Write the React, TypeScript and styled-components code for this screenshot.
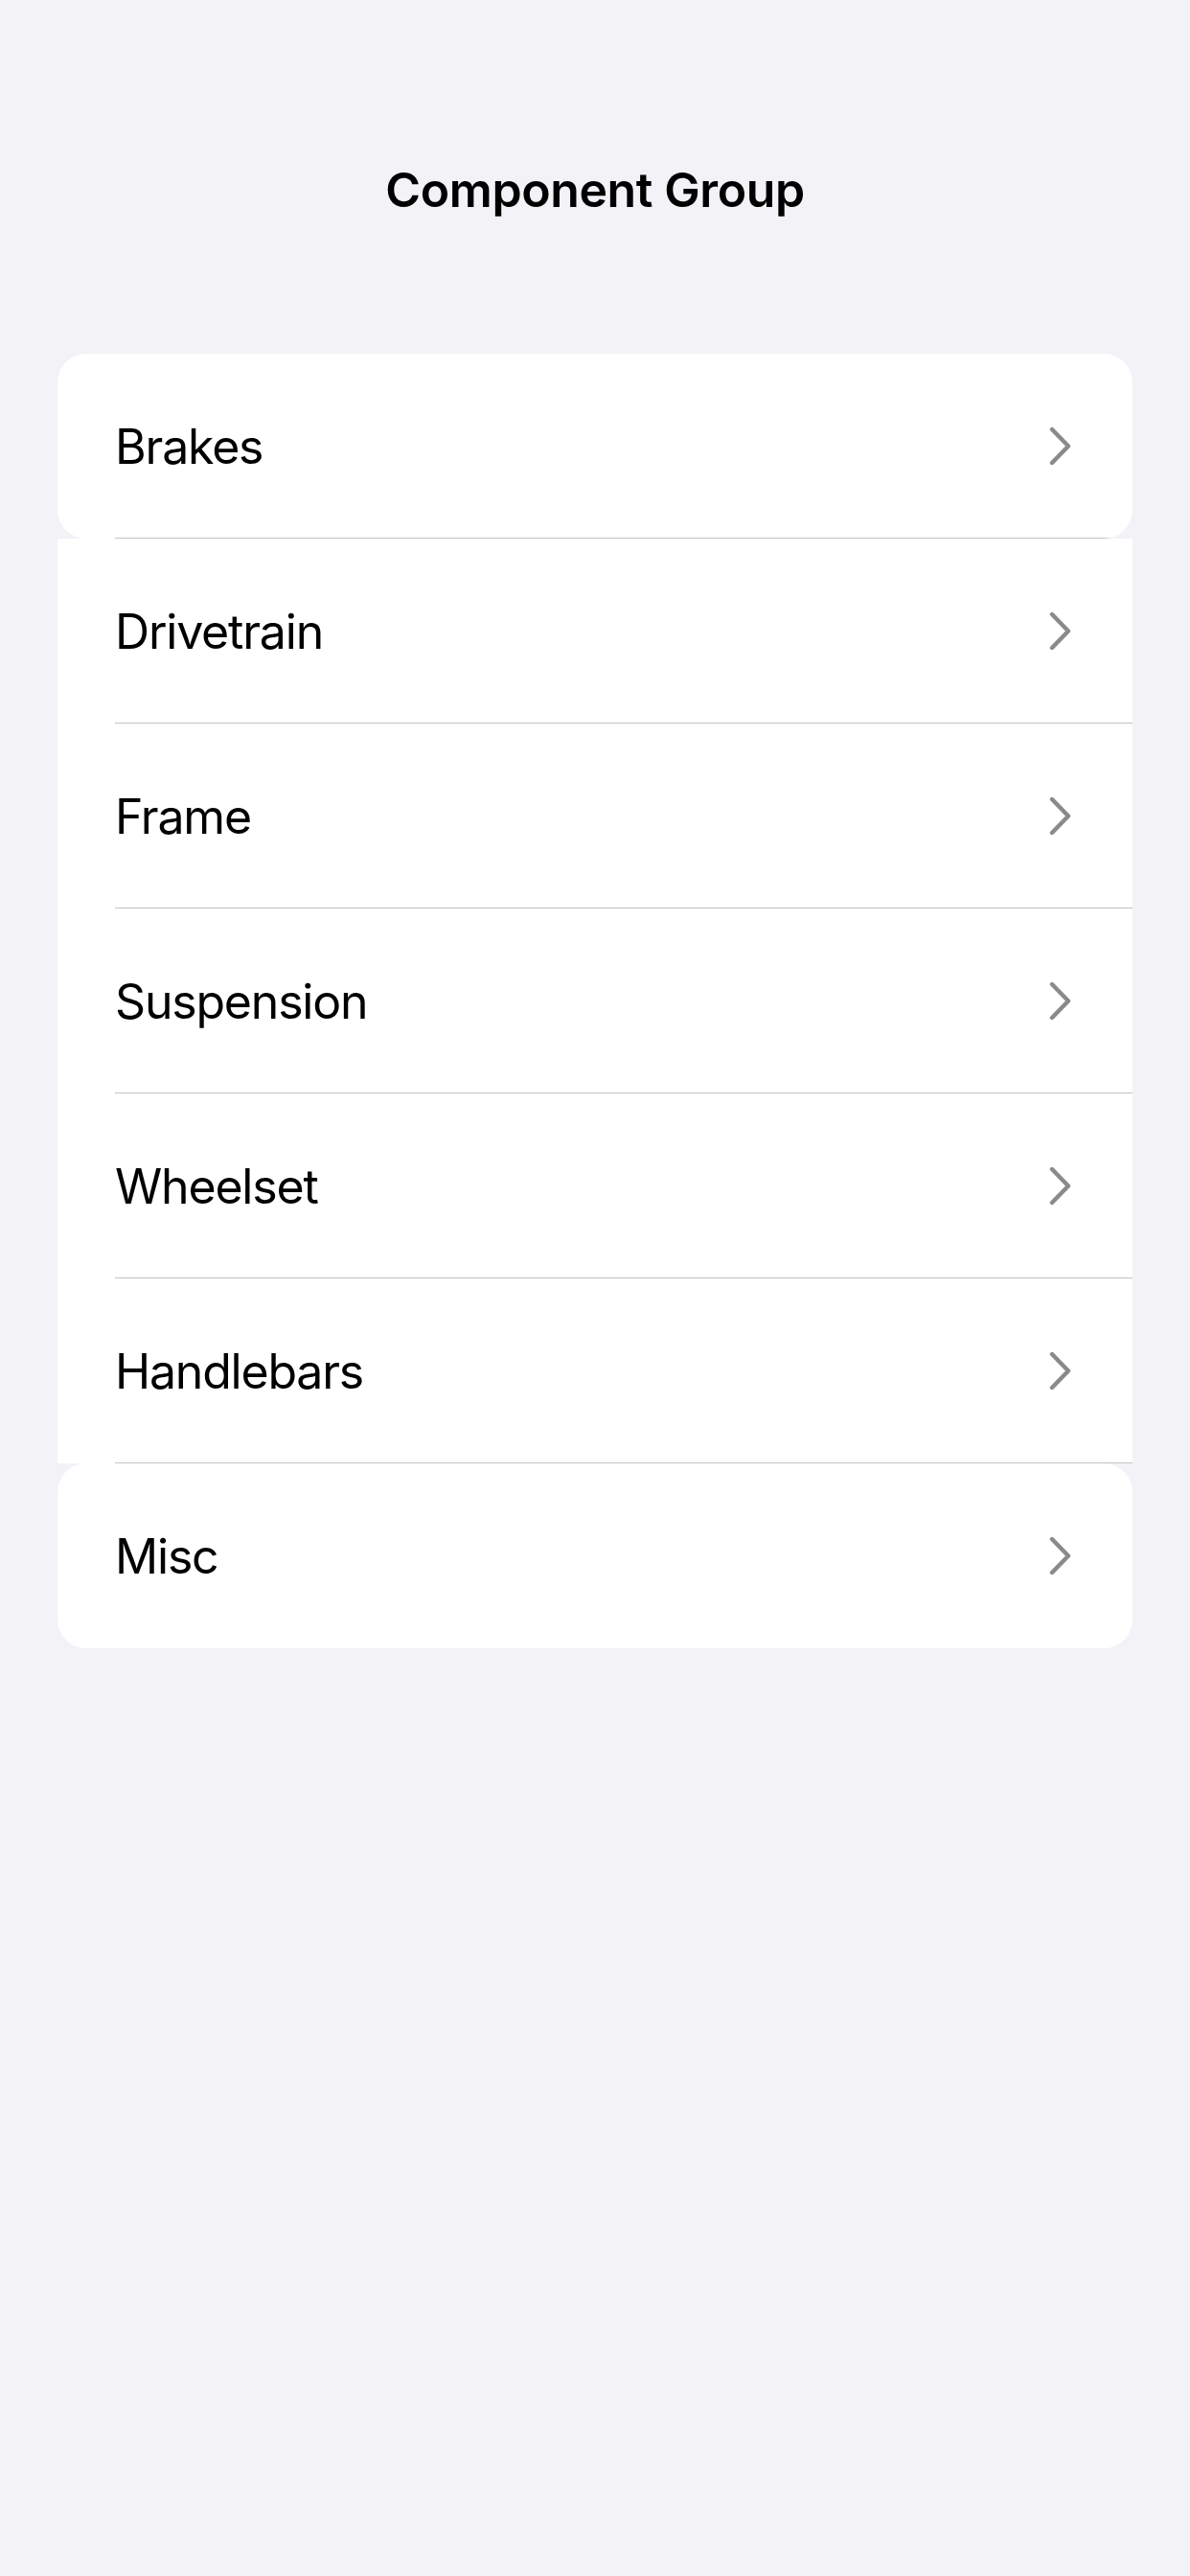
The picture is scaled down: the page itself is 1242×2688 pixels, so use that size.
import styled, { createGlobalStyle } from 'styled-components';

const GlobalStyle = createGlobalStyle`
    html, body {
        margin: 0;
        padding: 0;
        background: #F2F2F7;
    }
    body {
        font-family: "Inter", "Noto Sans", sans-serif;
        -webkit-font-smoothing: antialiased;
    }
`

const Page = styled.div`
    min-height: 2688px;
    background: #F2F2F7;
`

const NavBar = styled.header`
    height: 132px;
    padding-top: 132px;
    display: flex;
    align-items: center;
    justify-content: center;
`

const Title = styled.h1`
    margin: 0;
    font-size: 50px;
    font-weight: 600;
    color: #000;
    letter-spacing: -0.4px;
`

const List = styled.ul`
    list-style: none;
    margin: 105px 60px 0;
    padding: 0;
    display: flex;
    flex-direction: column;
`

const Row = styled.li<{ $rounded: boolean }>`
    background: #fff;
    border-radius: ${p => (p.$rounded ? '30px' : '0')};
    overflow: hidden;
    padding-left: 60px;
`

const RowInner = styled.div<{ $divider: boolean }>`
    height: 192px;
    display: flex;
    align-items: center;
    justify-content: space-between;
    padding-right: 64px;
    border-bottom: ${p => (p.$divider ? '1px solid #C2C2C6' : '1px solid transparent')};
`

const Label = styled.span`
    font-size: 50px;
    font-weight: 400;
    color: #000;
    letter-spacing: -1.2px;
    padding-top: 2px;
`

const Chevron = () => (
    <svg width="23" height="41" viewBox="0 0 23 41" fill="none">
        <polyline points="3,3 20,20.5 3,38" stroke="#8A8A8E" strokeWidth="4.4" strokeLinecap="round" strokeLinejoin="round" />
    </svg>
)

const groups = ['Brakes', 'Drivetrain', 'Frame', 'Suspension', 'Wheelset', 'Handlebars', 'Misc'];

export default function App() {
    return (
        <Page>
            <GlobalStyle />
            <NavBar>
                <Title>Component Group</Title>
            </NavBar>
            <List>
                {groups.map((g, i) => {
                    const last = i === groups.length - 1;
                    return (
                        <Row key={g} $rounded={i === 0 || last}>
                            <RowInner $divider={!last}>
                                <Label>{g}</Label>
                                <Chevron />
                            </RowInner>
                        </Row>
                    );
                })}
            </List>
        </Page>
    );
}
